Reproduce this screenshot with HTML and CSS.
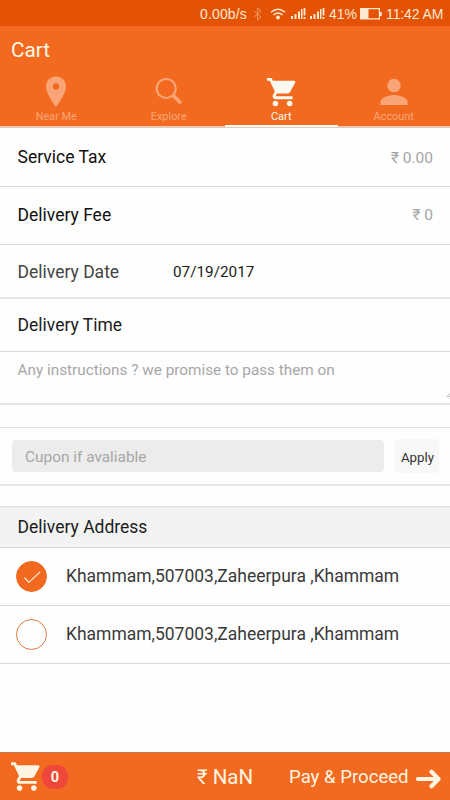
FILE: index.html
```html
<!DOCTYPE html>
<html lang="en">
<head>
<meta charset="utf-8">
<title>Cart</title>
<link rel="stylesheet" href="styles.css">
</head>
<body>
<div class="status">
  <span class="speed">0.00b/s</span>
  <svg class="bt" width="9" height="14" viewBox="0 0 9 14"><path d="M1 4l7 6-3.500 3V1L8 4l-7 6" fill="none" stroke="currentColor"/></svg>
  <svg class="wifi" width="16" height="12" viewBox="0 0 16 12"><path d="M1 4.200Q8-1.800 15 4.200M3.500 7Q8 3 12.500 7" fill="none" stroke="currentColor" stroke-width="1.500"/><circle cx="8" cy="9.500" r="1.900" fill="currentColor"/></svg>
  <svg class="sig" width="15" height="11" viewBox="0 0 15 11"><path d="M0 8h2v3H0zM3.500 6h2v5h-2zM7 3.500h2V11H7zM10 1h1.500v10H10zM12.600 0h1.800v7.500h-1.800zM12.600 9h1.800v2h-1.800z" fill="currentColor"/></svg>
  <svg class="sig" width="15" height="11" viewBox="0 0 15 11"><path d="M0 8h2v3H0zM3.500 6h2v5h-2zM7 3.500h2V11H7zM10 1h1.500v10H10zM12.600 0h1.800v7.500h-1.800zM12.600 9h1.800v2h-1.800z" fill="currentColor"/></svg>
  <span class="pct">41%</span>
  <svg class="bat" width="22" height="12" viewBox="0 0 22 12"><path d="M.6.600h18.800v10.300H.6z" fill="none" stroke="currentColor" stroke-width="1.200"/><path d="M1 1h7.500v10H1zM20 4h1.700v4H20z" fill="currentColor"/></svg>
  <span class="time">11:42 AM</span>
</div>
<header class="header">
  <h1 class="title">Cart</h1>
  <nav class="tabs">
    <div class="tab">
      <svg class="icon" width="36" height="34" viewBox="0 0 36 34"><path fill-rule="evenodd" d="M18 2.500C12.300 2.500 8 6.800 8 12.500c0 7.200 10 20.500 10 20.500S28 19.700 28 12.500C28 6.800 23.700 2.500 18 2.500zm0 6.800a3.200 3.200 0 1 1 0 6.400 3.200 3.200 0 0 1 0-6.400z" fill="currentColor"/></svg>
      <span class="label">Near Me</span>
    </div>
    <div class="tab">
      <svg class="icon" width="36" height="34" viewBox="0 0 36 34"><circle cx="15.200" cy="14.500" r="9.500" fill="none" stroke="currentColor" stroke-width="2.200"/><path d="M22 21.300l8 7.900" stroke="currentColor" stroke-width="3.600"/></svg>
      <span class="label">Explore</span>
    </div>
    <div class="tab active">
      <svg class="icon" width="36" height="34" viewBox="0 0 24.800 23.400"><path transform="translate(1.700 .7) scale(.98)" d="M7 18c-1.100 0-1.990.9-1.990 2S5.900 22 7 22s2-.9 2-2-.9-2-2-2zM1 2v2h2l3.600 7.590-1.350 2.450c-.16.280-.25.610-.25.960 0 1.100.9 2 2 2h12v-2H7.420c-.14 0-.25-.11-.25-.25l.03-.12.900-1.630h7.450c.75 0 1.410-.41 1.750-1.030l3.580-6.490c.08-.14.120-.31.120-.48 0-.55-.45-1-1-1H5.210l-.94-2H1zm16 16c-1.100 0-1.990.9-1.990 2s.89 2 1.990 2 2-.9 2-2-.9-2-2-2z" fill="currentColor"/></svg>
      <span class="label">Cart</span>
    </div>
    <div class="tab">
      <svg class="icon" width="36" height="34" viewBox="0 0 36 34"><circle cx="18" cy="11.500" r="6.700" fill="currentColor"/><path d="M4.500 31v-3c0-4.600 9-7 13.500-7s13.500 2.400 13.500 7v3z" fill="currentColor"/></svg>
      <span class="label">Account</span>
    </div>
  </nav>
</header>
<main class="content">
  <div class="row tax"><span>Service Tax</span><span class="amount">₹ 0.00</span></div>
  <div class="row fee"><span>Delivery Fee</span><span class="amount">₹ 0</span></div>
  <div class="row date"><span class="name">Delivery Date</span><span class="value">07/19/2017</span></div>
  <div class="row when"><span>Delivery Time</span></div>
  <div class="notes"><span class="hint">Any instructions ? we promise to pass them on</span>
    <svg class="grip" width="4" height="7" viewBox="0 0 4 7"><path d="M0 6.500l6-6M2.500 6.500L6 3" stroke="currentColor"/></svg>
  </div>
  <div class="coupon">
    <div class="field"><span class="hint">Cupon if avaliable</span></div>
    <div class="apply"><span>Apply</span></div>
  </div>
  <div class="row heading"><span class="heading-text">Delivery Address</span></div>
  <div class="row address">
    <span class="radio checked"><svg width="32" height="32" viewBox="0 0 32 32"><path d="M8.500 16.500l4.300 5L24 11" fill="none" stroke="currentColor" stroke-width="1.200"/></svg></span>
    <span class="place">Khammam,507003,Zaheerpura ,Khammam</span>
  </div>
  <div class="row address">
    <span class="radio"></span>
    <span class="place">Khammam,507003,Zaheerpura ,Khammam</span>
  </div>
</main>
<footer class="footer">
  <svg class="basket" width="30" height="30" viewBox="1 2 21 20.500"><path d="M7 18c-1.100 0-1.990.9-1.990 2S5.900 22 7 22s2-.9 2-2-.9-2-2-2zM1 2v2h2l3.600 7.590-1.350 2.450c-.16.280-.25.610-.25.960 0 1.100.9 2 2 2h12v-2H7.420c-.14 0-.25-.11-.25-.25l.03-.12.900-1.630h7.450c.75 0 1.410-.41 1.750-1.030l3.580-6.490c.08-.14.120-.31.120-.48 0-.55-.45-1-1-1H5.210l-.94-2H1zm16 16c-1.100 0-1.990.9-1.990 2s.89 2 1.990 2 2-.9 2-2-.9-2-2-2z" fill="currentColor"/></svg>
  <span class="count">0</span>
  <span class="total">₹ NaN</span>
  <span class="pay">Pay &amp; Proceed</span>
  <svg class="arrow" width="25" height="20" viewBox="0 0 25 20"><path d="M2 10H22M15.500 2.800l7 7.200-7 7.200" fill="none" stroke="currentColor" stroke-width="4.200" stroke-linecap="round" stroke-linejoin="round"/></svg>
</footer>
</body>
</html>
```

FILE: styles.css
```css
* { box-sizing: border-box; }
body {
  margin: 0;
  width: 450px;
  height: 800px;
  display: flex;
  flex-direction: column;
  overflow: hidden;
  background: #fefefe;
  color: #1c1c1c;
  font-family: Roboto, "Noto Sans", sans-serif;
  font-size: 17.5px;
  white-space: nowrap;
}
svg { display: block; flex: none; }
.status {
  height: 26px;
  flex: none;
  display: flex;
  align-items: center;
  padding: 1px 0 0 200px;
  background: #e35205;
  color: #ffe9d0;
  font: 14px "Liberation Sans", sans-serif;
}
.speed { width: 53px; letter-spacing: .15px; }
.bt { width: 9px; margin-right: 8px; opacity: .45; }
.wifi { margin-right: 5px; }
.sig { margin-right: 4px; }
.pct { width: 31px; }
.bat { margin-right: 4px; }
.time { letter-spacing: -.1px; }
.header {
  height: 102px;
  flex: none;
  display: flex;
  flex-direction: column;
  background: #f26a1f;
  border-bottom: 2px solid #e4cabd;
  color: #fff8e6;
}
.title {
  margin: 0;
  height: 48px;
  padding-left: 11px;
  font-size: 20.7px;
  font-weight: 400;
  line-height: 48px;
}
.tabs { display: grid; grid-template-columns: repeat(4, 1fr); height: 52px; }
.tab {
  display: flex;
  flex-direction: column;
  align-items: center;
  color: #f9a577;
  height: 53px;
}
.icon { flex: none; }
.label { font-size: 10.9px; line-height: 14px; margin-top: 2px; }
.active { color: #fffaf0; border-bottom: 2px solid #fffaf0; }
.content { flex: 1; }
.row {
  display: flex;
  align-items: center;
  padding: 0 17px 0 17.5px;
  border-bottom: 1px solid #d9d9d9;
}
.tax { height: 59px; }
.fee { height: 58px; padding-bottom: 1px; }
.date { height: 54px; padding-top: 2px; border-bottom: 2px solid #e8e8e8; }
.when { height: 53px; }
.tax, .fee { justify-content: space-between; color: #111; }
.amount { font-size: 15.5px; color: #a5a5a5; }
.tax .amount { padding-top: 2px; }
.name { width: 155.5px; color: #444; }
.value { font-size: 15.3px; color: #1c1c1c; }
.hint { color: #a7a7a7; font-size: 15.3px; }
.notes {
  height: 53px;
  display: flex;
  align-items: flex-start;
  justify-content: space-between;
  padding: 9px 0 0 17.5px;
  border-bottom: 2px solid #e6e6e6;
}
.grip { color: #aaa; margin-top: 30px; }
.coupon {
  margin: 22px 0 20px;
  height: 59px;
  display: flex;
  align-items: center;
  gap: 11px;
  padding: 0 11px 0 12px;
  border-top: 1px solid #e3e3e3;
  border-bottom: 2px solid #e6e6e6;
}
.field {
  flex: 1;
  height: 32px;
  display: flex;
  align-items: center;
  padding: 2px 0 0 13px;
  border-radius: 4px;
  background: #ececec;
}
.field .hint { font-size: 15.4px; }
.apply {
  width: 44px;
  height: 34px;
  display: flex;
  align-items: center;
  justify-content: center;
  padding: 2px 0 0 1px;
  border-radius: 3px;
  background: #f8f8f8;
  color: #333;
  font-size: 13.3px;
}
.heading {
  height: 42px;
  background: #f3f3f3;
  border-top: 1px solid #dcdcdc;
}
.address { height: 58px; padding-left: 16px; color: #3a3a3a; }
.radio {
  width: 31px;
  height: 31px;
  flex: none;
  margin-right: 19px;
  border: 1px solid #dd7d49;
  border-radius: 50%;
}
.checked { background: #f26a1f; border-color: #f26a1f; color: #ffe4cf; }
.checked svg { margin: -1px; }
.place { font-size: 17.48px; padding-bottom: 2px; }
.footer {
  height: 48px;
  flex: none;
  display: flex;
  align-items: center;
  padding: 1px 9px 0 11px;
  border-top: 1px solid #c57b58;
  background: #f26a1f;
  color: #fff5e2;
}
.count {
  width: 26px;
  height: 24px;
  margin-left: 1px;
  border-radius: 11px;
  background: #ef473a;
  font-size: 14.5px;
  font-weight: 700;
  line-height: 25px;
  text-align: center;
}
.total { width: 92px; margin-left: 129px; font-size: 20.5px; }
.pay { flex: 1; font-size: 18.6px; }
.arrow { margin-top: 3px; }
```
